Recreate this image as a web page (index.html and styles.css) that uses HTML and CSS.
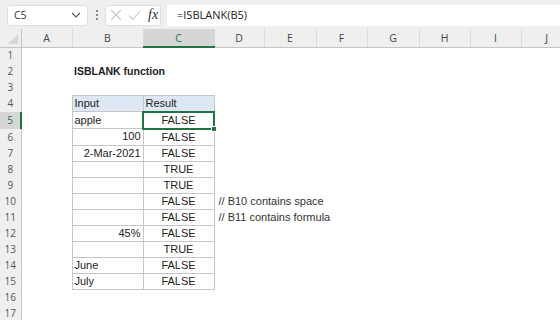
FILE: index.html
```html
<!DOCTYPE html>
<html lang="en">
<head>
    <meta charset="UTF-8">
    <meta name="viewport" content="width=device-width, initial-scale=1.0">
    <title>ISBLANK function</title>
    <link rel="stylesheet" href="styles.css">
</head>
<body>
    <div class="topbar">
        <div class="namebox">
            <span>C5</span>
            <svg class="chev" width="10" height="6" viewBox="0 0 10 6"><path d="M1 1 L5 5 L9 1" fill="none" stroke="#555" stroke-width="1.1"/></svg>
        </div>
        <div class="grip"><i></i><i></i><i></i></div>
        <div class="fxbox">
            <svg width="12" height="12" viewBox="0 0 12 12"><path d="M1 1 L11 11 M11 1 L1 11" stroke="#c8c8c8" stroke-width="1.1"/></svg>
            <svg width="13" height="11" viewBox="0 0 13 11"><path d="M1 5.5 L5 9.5 L12 1" fill="none" stroke="#c8c8c8" stroke-width="1.1"/></svg>
            <span class="fx">fx</span>
        </div>
        <div class="formula">=ISBLANK(B5)</div>
    </div>

    <table class="sheet">
        <colgroup>
            <col class="c-row">
            <col class="c-a">
            <col class="c-b">
            <col class="c-c">
            <col class="c-d">
            <col class="c-e">
            <col class="c-f">
            <col class="c-g">
            <col class="c-h">
            <col class="c-i">
            <col class="c-j">
        </colgroup>
        <tr class="heads">
            <th class="corner"><span class="tri"></span></th>
            <th>A</th><th>B</th><th class="sel">C</th><th>D</th><th>E</th>
            <th>F</th><th>G</th><th>H</th><th>I</th><th>J</th>
        </tr>
        <tr><th class="rn">1</th><td></td><td></td><td></td><td></td><td></td><td></td><td></td><td></td><td></td><td></td></tr>
        <tr><th class="rn">2</th><td></td><td class="title" colspan="2">ISBLANK function</td><td></td><td></td><td></td><td></td><td></td><td></td><td></td></tr>
        <tr><th class="rn">3</th><td></td><td></td><td></td><td></td><td></td><td></td><td></td><td></td><td></td><td></td></tr>
        <tr><th class="rn">4</th><td></td><td class="b hd">Input</td><td class="b hd">Result</td><td></td><td></td><td></td><td></td><td></td><td></td><td></td></tr>
        <tr><th class="rn active">5</th><td></td><td class="b">apple</td><td class="b ctr cur">FALSE<span class="handle"></span></td><td></td><td></td><td></td><td></td><td></td><td></td><td></td></tr>
        <tr><th class="rn">6</th><td></td><td class="b num">100</td><td class="b ctr">FALSE</td><td></td><td></td><td></td><td></td><td></td><td></td><td></td></tr>
        <tr><th class="rn">7</th><td></td><td class="b num">2-Mar-2021</td><td class="b ctr">FALSE</td><td></td><td></td><td></td><td></td><td></td><td></td><td></td></tr>
        <tr><th class="rn">8</th><td></td><td class="b"></td><td class="b ctr">TRUE</td><td></td><td></td><td></td><td></td><td></td><td></td><td></td></tr>
        <tr><th class="rn">9</th><td></td><td class="b"></td><td class="b ctr">TRUE</td><td></td><td></td><td></td><td></td><td></td><td></td><td></td></tr>
        <tr><th class="rn">10</th><td></td><td class="b"></td><td class="b ctr">FALSE</td><td class="note" colspan="3">// B10 contains space</td><td></td><td></td><td></td><td></td></tr>
        <tr><th class="rn">11</th><td></td><td class="b"></td><td class="b ctr">FALSE</td><td class="note" colspan="3">// B11 contains formula</td><td></td><td></td><td></td><td></td></tr>
        <tr><th class="rn">12</th><td></td><td class="b num">45%</td><td class="b ctr">FALSE</td><td></td><td></td><td></td><td></td><td></td><td></td><td></td></tr>
        <tr><th class="rn">13</th><td></td><td class="b"></td><td class="b ctr">TRUE</td><td></td><td></td><td></td><td></td><td></td><td></td><td></td></tr>
        <tr><th class="rn">14</th><td></td><td class="b">June</td><td class="b ctr">FALSE</td><td></td><td></td><td></td><td></td><td></td><td></td><td></td></tr>
        <tr><th class="rn">15</th><td></td><td class="b">July</td><td class="b ctr">FALSE</td><td></td><td></td><td></td><td></td><td></td><td></td><td></td></tr>
        <tr><th class="rn">16</th><td></td><td></td><td></td><td></td><td></td><td></td><td></td><td></td><td></td><td></td></tr>
        <tr><th class="rn">17</th><td></td><td></td><td></td><td></td><td></td><td></td><td></td><td></td><td></td><td></td></tr>
    </table>
</body>
</html>
```

FILE: styles.css
```css
*{
    margin:0;
    padding:0;
    box-sizing:border-box;
}
body{
    width:560px;
    height:320px;
    overflow:hidden;
    background:#fff;
    font-family:"Liberation Sans", Arial, sans-serif;
    font-size:11px;
    color:#222;
}

/* formula bar */
.topbar{
    display:flex;
    align-items:center;
    height:30px;
    padding:5px 0 4px 7px;
    background:#efefef;
    border-bottom:1px solid #d6d6d6;
}
.namebox{
    width:81px;
    height:21px;
    display:flex;
    align-items:center;
    justify-content:space-between;
    padding:0 6px 0 6px;
    background:#fff;
    border:1px solid #e0e0e0;
    border-radius:3px;
    font-family:"Open Sans", sans-serif;
    font-size:10.5px;
    color:#333;
}
.grip{
    width:17px;
    display:flex;
    flex-direction:column;
    align-items:center;
    gap:2px;
}
.grip i{
    width:2px;
    height:2px;
    background:#8a8a8a;
}
.fxbox{
    width:56px;
    height:21px;
    display:flex;
    align-items:center;
    gap:6px;
    padding-left:4px;
    background:#fff;
    border:1px solid #e0e0e0;
    border-radius:3px;
}
.fx{
    font-family:"Liberation Serif", serif;
    font-style:italic;
    font-size:14px;
    color:#333;
    margin-left:1px;
}
.formula{
    flex:1;
    height:21px;
    margin-left:6px;
    padding-left:10px;
    line-height:20px;
    background:#fff;
    font-family:"Open Sans", sans-serif;
    font-size:11px;
    color:#222;
}

/* sheet */
.sheet{
    table-layout:fixed;
    border-collapse:collapse;
    width:572px;
    margin-top:-1px;
}
.c-row{ width:21px; }
.c-a{ width:51px; }
.c-b{ width:71px; }
.c-c{ width:71px; }
.c-d{ width:50px; }
.c-e{ width:52px; }
.c-f{ width:51px; }
.c-g{ width:52px; }
.c-h{ width:51px; }
.c-i{ width:51px; }
.c-j{ width:51px; }

.heads th{
    height:18px;
    background:#efefef;
    border-left:1px solid #dadada;
    border-bottom:1px solid #c4c4c4;
    font-family:"Open Sans", sans-serif;
    font-weight:normal;
    font-size:10.5px;
    color:#444;
}
.heads th.corner{
    border-left:none;
    border-right:1px solid #c4c4c4;
    position:relative;
}
.tri{
    position:absolute;
    right:3px;
    bottom:3px;
    width:0;
    height:0;
    border-left:10px solid transparent;
    border-bottom:10px solid #d6d6d6;
}
.heads th.sel{
    background:#d6d6d6;
    border-bottom:2px solid #217346;
    color:#217346;
}

tr{
    height:16px;
}
td{
    padding:0 2px;
    white-space:nowrap;
    overflow:visible;
    line-height:15px;
}
.rn{
    background:#efefef;
    border-right:1px solid #c4c4c4;
    font-family:"Open Sans", sans-serif;
    font-weight:normal;
    font-size:10px;
    color:#555;
    text-align:center;
}
.rn.active{
    background:#d6d6d6;
    border-right:2px solid #217346;
    color:#217346;
}

.title{
    font-weight:bold;
    font-size:10.5px;
    padding-left:2px;
}
.b{
    border:1px solid #c6c6c6;
}
.hd{
    background:#dde8f4;
}
.num{
    text-align:right;
}
.ctr{
    text-align:center;
}
.cur{
    position:relative;
    border:2px solid #217346;
}
.handle{
    position:absolute;
    right:-4px;
    bottom:-4px;
    width:6px;
    height:6px;
    background:#217346;
    border:1px solid #fff;
}
.note{
    padding-left:4px;
    color:#333;
}
```
